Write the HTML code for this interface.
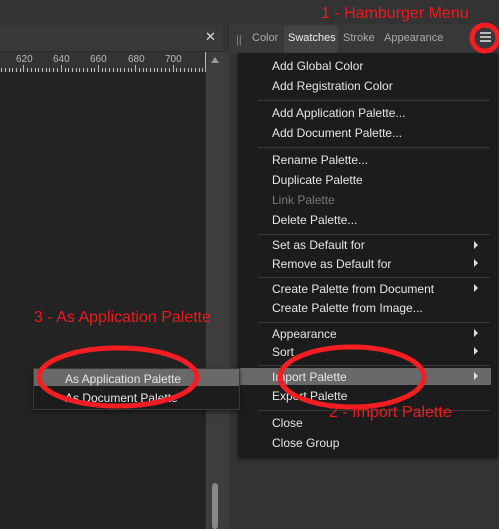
<!DOCTYPE html>
<html><head><style>
body{margin:0;width:499px;height:529px;background:#333;position:relative;overflow:hidden;font-family:"Liberation Sans",sans-serif}
.a{position:absolute}
.mi{position:absolute;left:272px;color:#e6e6e6;font-size:12px;line-height:14px;white-space:nowrap}
.sep{position:absolute;left:258px;width:232px;height:1px;background:#3a3a3a}
.ar{position:absolute;left:474px;width:0;height:0;border-left:4px solid #ddd;border-top:4px solid transparent;border-bottom:4px solid transparent}
.red{position:absolute;color:#ee1a1e;font-size:16px;white-space:nowrap}
.tab{position:absolute;top:32px;font-size:11px;color:#aaa;white-space:nowrap}
</style></head><body>
<div class="a" style="left:0;top:0;width:499px;height:24px;background:#333"></div>
<div class="a" style="left:0;top:25px;width:223px;height:26px;background:#393939;border-bottom:1px solid #2a2a2a"></div>
<div class="a" style="left:205px;top:29px;color:#ddd;font-size:13px">✕</div>
<div class="a" style="left:0;top:52px;width:205px;height:20px;background:#333"></div>
<svg class="a" style="left:0;top:52px" width="206" height="20">
<g fill="#bbb" font-size="10" font-family="Liberation Sans"><text x="16" y="10">620</text><text x="53" y="10">640</text><text x="90" y="10">660</text><text x="128" y="10">680</text><text x="165" y="10">700</text></g>
<g stroke="#bbb" stroke-width="1">
<path d="M1.5 16v4M5.5 16v4M9.5 16v4M12.5 16v4M16.5 16v4M20.5 16v4M23.5 13v7M27.5 16v4M31.5 16v4M35.5 16v4M38.5 16v4M42.5 16v4M46.5 16v4M49.5 16v4M53.5 16v4M57.5 16v4M61.5 13v7M65.5 16v4M68.5 16v4M72.5 16v4M76.5 16v4M79.5 16v4M83.5 16v4M87.5 16v4M91.5 16v4M94.5 16v4M98.5 13v7M102.5 16v4M105.5 16v4M109.5 16v4M113.5 16v4M117.5 16v4M120.5 16v4M124.5 16v4M128.5 16v4M131.5 16v4M135.5 13v7M139.5 16v4M143.5 16v4M146.5 16v4M150.5 16v4M154.5 16v4M157.5 16v4M161.5 16v4M165.5 16v4M169.5 16v4M173.5 13v7M176.5 16v4M180.5 16v4M184.5 16v4M188.5 16v4M191.5 16v4M195.5 16v4M199.5 16v4M202.5 16v4"/>
<path d="M205.5 0v20"/></g></svg>
<div class="a" style="left:0;top:72px;width:206px;height:457px;background:#232323"></div>
<div class="a" style="left:206px;top:52px;width:23px;height:477px;background:#3d3d3d"></div>
<div class="a" style="left:211px;top:57px;width:0;height:0;border-bottom:6px solid #999;border-left:4px solid transparent;border-right:4px solid transparent"></div>
<div class="a" style="left:212px;top:483px;width:6px;height:46px;background:#888;border-radius:3px"></div>
<div class="a" style="left:229px;top:24px;width:270px;height:29px;background:#383838"></div>
<div class="a" style="left:229px;top:53px;width:270px;height:476px;background:#333"></div>
<div class="a" style="left:236px;top:34px;color:#888;font-size:11px">||</div>
<div class="a" style="left:284px;top:26px;width:54px;height:27px;background:#444"></div>
<div class="tab" style="left:252px">Color</div>
<div class="tab" style="left:288px;color:#eee">Swatches</div>
<div class="tab" style="left:343px">Stroke</div>
<div class="tab" style="left:384px">Appearance</div>
<div class="a" style="left:480px;top:32px;width:11px;height:2px;background:#bbb;box-shadow:0 4px #bbb,0 8px #bbb"></div>
<div class="a" style="left:238px;top:53px;width:260px;height:404px;background:#1c1c1c;box-shadow:0 2px 4px rgba(0,0,0,.5)"></div>
<div class="a" style="left:240px;top:368px;width:251px;height:17px;background:#696969"></div>
<div class="mi" style="top:59px">Add Global Color</div>
<div class="mi" style="top:79px">Add Registration Color</div>
<div class="sep" style="top:100px"></div>
<div class="mi" style="top:106px">Add Application Palette...</div>
<div class="mi" style="top:126px">Add Document Palette...</div>
<div class="sep" style="top:147px"></div>
<div class="mi" style="top:153px">Rename Palette...</div>
<div class="mi" style="top:173px">Duplicate Palette</div>
<div class="mi" style="top:193px;color:#777">Link Palette</div>
<div class="mi" style="top:213px">Delete Palette...</div>
<div class="sep" style="top:234px"></div>
<div class="mi" style="top:238px">Set as Default for</div><div class="ar" style="top:241px"></div>
<div class="mi" style="top:257px">Remove as Default for</div><div class="ar" style="top:259px"></div>
<div class="sep" style="top:277px"></div>
<div class="mi" style="top:282px">Create Palette from Document</div><div class="ar" style="top:284px"></div>
<div class="mi" style="top:301px">Create Palette from Image...</div>
<div class="sep" style="top:322px"></div>
<div class="mi" style="top:327px">Appearance</div><div class="ar" style="top:329px"></div>
<div class="mi" style="top:345px">Sort</div><div class="ar" style="top:347px"></div>
<div class="sep" style="top:365px"></div>
<div class="mi" style="top:370px">Import Palette</div><div class="ar" style="top:372px"></div>
<div class="mi" style="top:389px">Export Palette</div>
<div class="sep" style="top:410px"></div>
<div class="mi" style="top:416px">Close</div>
<div class="mi" style="top:436px">Close Group</div>
<div class="a" style="left:33px;top:368px;width:205px;height:40px;background:#1c1c1c;border:1px solid #3a3a3a;box-shadow:0 2px 4px rgba(0,0,0,.5)"></div>
<div class="a" style="left:34px;top:369px;width:205px;height:17px;background:#696969"></div>
<div class="mi" style="left:65px;top:372px">As Application Palette</div>
<div class="mi" style="left:65px;top:391px">As Document Palette</div>
<svg class="a" style="left:0;top:0" width="499" height="529">
<g fill="none" stroke="#f41e22" stroke-width="5">
<circle cx="485" cy="38" r="13"/>
<ellipse cx="118" cy="377" rx="79" ry="29"/>
<ellipse cx="352" cy="377" rx="72" ry="30"/>
</g></svg>
<div class="red" style="left:321px;top:5px">1 - Hamburger Menu</div>
<div class="red" style="left:34px;top:309px">3 - As Application Palette</div>
<div class="red" style="left:329px;top:404px">2 - Import Palette</div>
</body></html>
